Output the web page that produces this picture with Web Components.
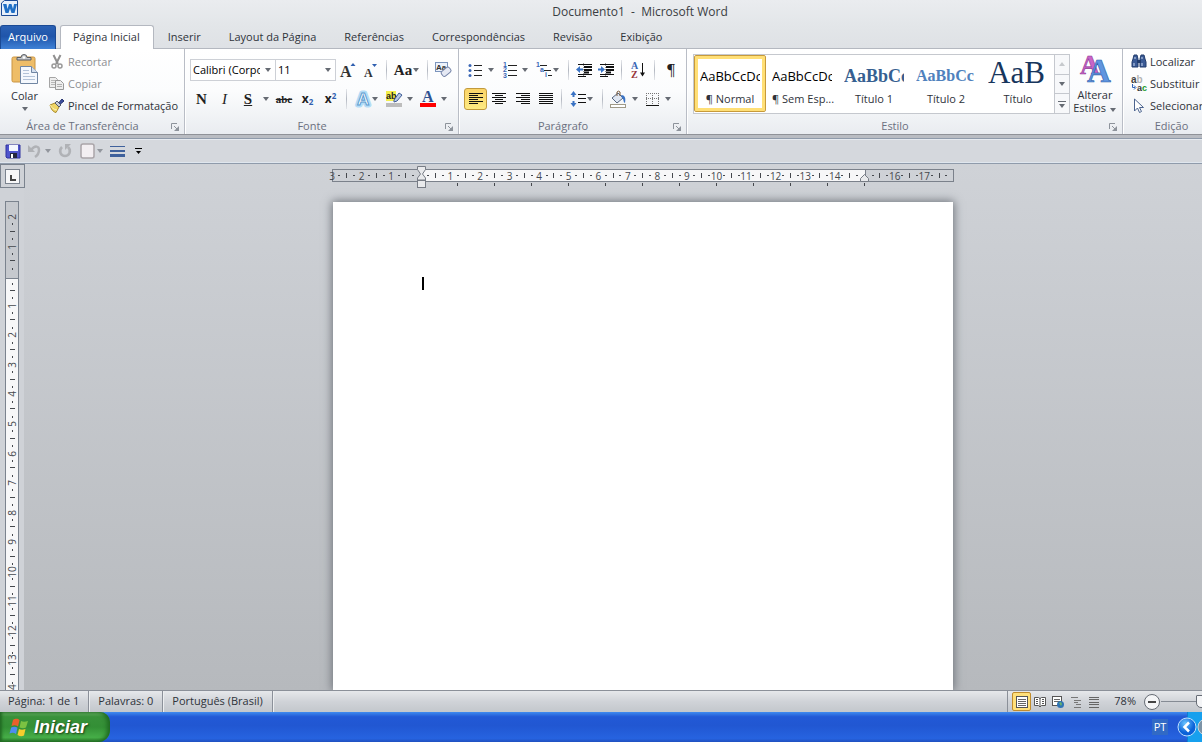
<!DOCTYPE html>
<html lang="pt-BR">
<head>
<meta charset="utf-8">
<title>Documento1 - Microsoft Word</title>
<style>
html, body { height: 100%; margin: 0; }
body { font: 11px/16px "Open Sans", "Noto Sans", sans-serif; color: #2f333a; overflow: hidden; }
</style>
</head>
<body>
<word-app></word-app>
<script>
const ICONS = {
  word: [17, 16, '<path d="M.5 3L3.500.500h13v15H.5z" fill="#e6effb" stroke="#1c4b96"/><path d="M2 4h3.500l1 5 1.500-5h2.500l1.500 5 1-5H16l-2.500 9H10.500L9 8.500 7.500 13H4.500z" fill="#1f6fc6"/>'],
  paste: [28, 30, '<rect x="1" y="3" width="23" height="25" rx="1.500" fill="#eebd68" stroke="#c99443"/><path d="M6 6V3.500h4a3 3 0 0 1 6 0h4V6z" fill="#c3c6ca" stroke="#5a5d62"/><circle cx="13" cy="3.500" r="1.200" fill="#fff"/><path d="M9.500 12.500h11l6 6v11h-17z" fill="#f4f8fd" stroke="#7086a3"/><path d="M20.500 12.500v6h6" fill="#d2deee" stroke="#7086a3"/><path d="M12 16.500h6M12 19.500h6M12 22.500h12M12 25.500h12" stroke="#b3c3d8"/>'],
  cut: [16, 16, '<path d="M4.500 1l4.500 9M11.500 1L7 10" stroke="#909090" stroke-width="2" fill="none"/><circle cx="5" cy="12" r="2" fill="none" stroke="#999" stroke-width="1.500"/><circle cx="11" cy="12" r="2" fill="none" stroke="#999" stroke-width="1.500"/>'],
  copy: [16, 16, '<path d="M.5 1.500h6l2 2v8h-8z" fill="#eee" stroke="#a5a5a5"/><path d="M2 4.500h5M2 6.500h5M2 8.500h4" stroke="#b8b8b8"/><path d="M6.500 4.500h5l3 3v6h-8z" fill="#eee" stroke="#999"/><path d="M8 8.500h5M8 10.500h5" stroke="#b0b0b0"/>'],
  brush: [16, 16, '<path d="M1 7l5-2 4 4-3 5.500C4 14 2 11 1 7z" fill="#f0d566" stroke="#a98a2a"/><path d="M1 7c1 2 4 5 7 5" stroke="#fdf4bb" fill="none"/><path d="M6 5l2-2 4 4-2 2z" fill="#c9cdd6" stroke="#555c6c"/><path d="M10 4.500L13 1l2 2-3.500 3z" fill="#3c4da0" stroke="#28346f"/>'],
  grow: [16, 16, '<text x="0" y="15" font-family="Liberation Serif" font-weight="700" font-size="16" fill="#333">A</text><path d="M10.500 4l2.500-3 2.500 3z" fill="#2f5fb0"/>'],
  shrink: [16, 16, '<text x="1" y="15" font-family="Liberation Serif" font-weight="700" font-size="12" fill="#333">A</text><path d="M9 2h5l-2.500 3z" fill="#2f5fb0"/>'],
  clear: [18, 18, '<rect x="1.500" y="1.500" width="12" height="9" fill="#eef3fb" stroke="#7c95bd"/><text x="2" y="9" font-family="Liberation Sans" font-size="8" font-weight="700" fill="#333">Aa</text><rect x="7" y="8.500" width="10" height="6" rx="2" transform="rotate(-40 11 11)" fill="#e5e9f4" stroke="#7584a8"/>'],
  glow: [16, 16, '<g font-family="Liberation Sans" font-weight="700" font-size="17" fill="#fff"><text x="2" y="14" stroke="#b4dcf6" stroke-width="5" stroke-linejoin="round">A</text><text x="2" y="14" stroke="#5b9bd0">A</text></g>'],
  mark: [16, 18, '<rect x="0" y="1" width="10" height="10" fill="#f4f04a"/><text x="0" y="9" font-family="Liberation Sans" font-size="9" font-weight="700" fill="#222">ab</text><path d="M8 10l5-7 3 2-5 6-3 1z" fill="#b8c9e6" stroke="#3f5d96"/><rect x="0" y="13" width="16" height="4" fill="#bdbdbd"/>'],
  color: [16, 18, '<text x="2" y="12" font-family="Liberation Serif" font-weight="700" font-size="16" fill="#2f5291">A</text><rect x="0" y="13" width="16" height="4" fill="#f00"/>'],
  bullets: [16, 16, '<path d="M7 3.500h8M7 8.500h8M7 13.500h8" stroke="#222"/><g fill="#3a66b5"><circle cx="3" cy="3.500" r="1.500"/><circle cx="3" cy="8.500" r="1.500"/><circle cx="3" cy="13.500" r="1.500"/></g>'],
  numbers: [16, 16, '<path d="M7 3.500h9M7 8.500h9M7 13.500h9" stroke="#222"/><g font-family="Liberation Sans" font-weight="700" font-size="7" fill="#3a66b5"><text x="2" y="5">1</text><text x="2" y="10">2</text><text x="2" y="16">3</text></g>'],
  multi: [16, 16, '<path d="M4 3.500h7M8 8.500h7M12 13.500h4" stroke="#222"/><g font-family="Liberation Sans" font-weight="700" font-size="7" fill="#3a66b5"><text x="0" y="5">1</text><text x="4" y="10">a</text><text x="9" y="15">i</text></g>'],
  outdent: [16, 16, '<path d="M2 2.500h14M2 12.500h14M2 14.500h8" stroke="#111"/><path d="M8 5h8M8 8h8M8 10.500h5" stroke="#111" stroke-width="2"/><path d="M7.500 1v14" stroke="#999" stroke-dasharray="1 1"/><path d="M0 7.500L4 4v2.500h3v2H4V11z" fill="#3a73c4"/>'],
  indent: [16, 16, '<path d="M2 2.500h14M2 12.500h14M2 14.500h8" stroke="#111"/><path d="M8 5h8M8 8h8M8 10.500h5" stroke="#111" stroke-width="2"/><path d="M7.500 1v14" stroke="#999" stroke-dasharray="1 1"/><path d="M7 7.500L3 4v2.500H0v2h3V11z" fill="#3a73c4"/>'],
  sort: [16, 18, '<text x="1" y="8" font-family="Liberation Serif" font-weight="700" font-size="10" fill="#3a66b5">A</text><text x="1" y="17" font-family="Liberation Serif" font-weight="700" font-size="10" fill="#98343a">Z</text><path d="M12.500 2v12" stroke="#111"/><path d="M10 11.500h5l-2.500 4z" fill="#111"/>'],
  left: [16, 16, '<path d="M1 2.500h14M1 4.500h9M1 6.500h14M1 8.500h9M1 10.500h14M1 12.500h9" stroke="#111"/>'],
  center: [16, 16, '<path d="M1 2.500h14M4 4.500h8M1 6.500h14M4 8.500h8M1 10.500h14M4 12.500h8" stroke="#111"/>'],
  right: [16, 16, '<path d="M1 2.500h14M6 4.500h9M1 6.500h14M6 8.500h9M1 10.500h14M6 12.500h9" stroke="#111"/>'],
  justify: [16, 16, '<path d="M1 2.500h14M1 4.500h14M1 6.500h14M1 8.500h14M1 10.500h14M1 12.500h14" stroke="#111"/>'],
  spacing: [16, 18, '<path d="M8 4.500h8M8 8.500h8M8 12.500h8" stroke="#111" stroke-width="1.200"/><path d="M3.500 1l3 4h-2v2h-2V5h-2zM3.500 17l3-4h-2v-2h-2v2h-2z" fill="#3a73c4"/>'],
  fill: [18, 18, '<path d="M3 8l6-5 5 5-6 5z" fill="#dfe6f1" stroke="#56657f"/><path d="M8 6V2a2 2 0 0 1 3 0v4" fill="none" stroke="#7a5a3a"/><path d="M12 5c4 0 5 3 4 8-2-1-1-4-3-5z" fill="#3a73c4"/><rect x="1.500" y="14.500" width="15" height="3" fill="#fff" stroke="#a09a88"/>'],
  borders: [16, 16, '<path d="M2.500 2v11M8.500 2v11M14.500 2v11M2 2.500h13M2 7.500h13" stroke="#777" stroke-dasharray="1 1"/><path d="M2 14.500h13" stroke="#111"/>'],
  styles: [32, 30, '<g font-family="Liberation Serif" font-weight="700"><text x="1" y="20" font-size="27" fill="#c965c8" stroke="#8f3795" stroke-width=".6">A</text><text x="8" y="28" font-size="33" fill="#5f95e0" stroke="#2c5ca8" stroke-width=".6">A</text></g>'],
  find: [16, 16, '<path d="M2 5l1-4h3l1 4v8H1V8zM9 5l1-4h3l1 4 1 3v5H9z" fill="#3a5a95" stroke="#223c6c"/><path d="M6 6h4v3H6z" fill="#223c6c"/><path d="M3 9v3M11 9v3M4 3v2M11 3v2" stroke="#cbd9f2"/>'],
  replace: [16, 16, '<text x="0" y="7" font-family="Liberation Sans" font-weight="700" font-size="10" fill="#444">a<tspan fill="#b5b5b5">b</tspan></text><path d="M1.500 8v3.500H4M3 9.500l2 2-2 2" stroke="#2f62b5" fill="none"/><text x="6" y="15" font-family="Liberation Sans" font-weight="700" font-size="9" fill="#333">a<tspan fill="#1b9b2b">c</tspan></text>'],
  select: [16, 16, '<path d="M3.500 1v12l3-3 2 4.500 2-1L8.500 9.500h4z" fill="#fff" stroke="#4c648f"/>'],
  save: [16, 16, '<path d="M1 2h14v13H2l-1-1z" fill="#4f55cc" stroke="#3133a0"/><rect x="4" y="2" width="9" height="6" fill="#f4f7ff"/><rect x="5" y="10" width="7" height="5" fill="#23263f"/><rect x="6" y="11" width="2" height="4" fill="#fff"/>'],
  undo: [16, 16, '<path d="M4 7c4-5 8-4 8 0 0 3-1 5-4 7" fill="none" stroke="#b0b2b6" stroke-width="2.500"/><path d="M1 2v7h7z" fill="#b0b2b6"/>'],
  redo: [16, 16, '<path d="M4 4c-4 4-1 9 3 9s7-5 3-9" fill="none" stroke="#b0b2b6" stroke-width="2.500"/><path d="M7 1h6L7 7z" fill="#b0b2b6"/>'],
  box: [16, 16, '<rect x="1" y="1" width="13" height="14" rx="2" fill="#f3eff2" stroke="#aaa5a9" stroke-width="1.500"/>'],
  lines: [16, 16, '<path d="M0 3.500h15" stroke="#3f619c"/><path d="M0 8h15" stroke="#3f619c" stroke-width="2"/><path d="M0 12.500h15" stroke="#3f619c" stroke-width="3"/>'],
  more: [8, 8, '<path d="M0 1.500h7" stroke="#000"/><path d="M1 4h5L3.500 7z"/>'],
  launch: [8, 8, '<path d="M.5 6V.5H6" fill="none" stroke="#8d939b"/><path d="M3 3l3 3" stroke="#8d939b"/><path d="M8 3v5H3z" fill="#8d939b"/>'],
  down: [8, 4, '<path d="M1 0h6L4 4z" fill="#666b73"/>'],
  up: [8, 4, '<path d="M1 4h6L4 0z" fill="#c6c9cd"/>'],
  expand: [8, 8, '<path d="M0 1.500h8" stroke="#666b73"/><path d="M1 4h6L4 8z" fill="#666b73"/>'],
  print: [14, 14, '<rect x="1.500" y="1.500" width="11" height="11" fill="#fff" stroke="#555"/><path d="M3 4.500h8M3 6.500h8M3 8.500h8M3 10.500h8" stroke="#666"/>'],
  read: [14, 14, '<path d="M1.500 2.500h4l1.500 1 1.500-1h4v8h-4L7 12l-1.500-1.500h-4z" fill="#fff" stroke="#555"/><path d="M7 3v8M3 4.500h2M3 6.500h2M3 8.500h2M9 4.500h2M9 6.500h2M9 8.500h2" stroke="#555"/>'],
  web: [14, 14, '<rect x="1.500" y="1.500" width="9" height="9" fill="#fff" stroke="#555"/><path d="M3 4.500h6M3 6.500h6" stroke="#666"/><circle cx="9.500" cy="9.500" r="3.500" fill="#3074b5"/><path d="M8 8l2-1 1 2-1 2z" fill="#69b36b"/>'],
  outline: [14, 14, '<path d="M2 2.500h7M5 5.500h7M5 7.500h4M7 9.500h5M5 12.500h7" stroke="#777"/>'],
  draft: [14, 14, '<path d="M2 2.500h10M2 4.500h10M2 7.500h10M2 9.500h10M2 12.500h10" stroke="#666"/>'],
  minus: [16, 16, '<circle cx="8" cy="8" r="7.500" fill="#f4f5f7" stroke="#666c75"/><path d="M4 8h8" stroke="#444" stroke-width="2"/>'],
  flag: [20, 20, '<path d="M3 3c3-2 5-1 6.500 0L8 9.500C6 8 4 8 1.500 9z" fill="#e9602c"/><path d="M11 4c2 1 4 1 7 0l-2 6.500c-2 1-4 1-6.500 0z" fill="#7cc242"/><path d="M1.200 10.500c2.500-1 4.500-1 6.300.3L6 17c-2-1.500-4-1.500-6.500-.5z" fill="#4d8df0"/><path d="M9 12c2 1 4 1 6.500 0L14 18.500c-2 1-4 1-6.500-.5z" fill="#f7cd2d"/>'],
  chevron: [20, 20, '<defs><radialGradient id="g" cx=".4" cy=".3"><stop offset="0" stop-color="#6cc5ff"/><stop offset="1" stop-color="#0b62d8"/></radialGradient></defs><circle cx="10" cy="10" r="9" fill="url(#g)" stroke="#bfe0ff"/><path d="M12 5.500L7.500 10l4.500 4.500" fill="none" stroke="#fff" stroke-width="2.500"/>'],
  tray: [18, 18, '<circle cx="9" cy="9" r="8" fill="#7c93a6" stroke="#ccd6de"/><circle cx="9" cy="9" r="3" fill="#ddd"/>'],
  hourglass: [9, 22, '<path d="M.5.500h8v3l-3 4.500 3 4v2H.5v-2l3-4-3-4.500z" fill="#e9eaec" stroke="#777c85"/><rect x=".5" y="14.500" width="8" height="7" fill="#e9eaec" stroke="#777c85"/>'],
  margin: [9, 8, '<path d="M.5 7.500v-3l4-4 4 4v3z" fill="#e9eaec" stroke="#777c85"/>']
};

const define = (name, html, setup) => {
  const tpl = document.createElement('template');
  tpl.innerHTML = html;
  customElements.define(name, class extends HTMLElement {
    connectedCallback() {
      if (this.shadowRoot) return;
      this.attachShadow({ mode: 'open' }).append(tpl.content.cloneNode(true));
      if (setup) setup(this, this.shadowRoot);
    }
  });
};

define('w-icon', '<style>:host{display:inline-flex;flex:none}svg{display:block;overflow:visible}</style>', (el, root) => {
  const [w, h, body] = ICONS[el.getAttribute('name')];
  const box = document.createElement('div');
  box.innerHTML = `<svg width="${w}" height="${h}" viewBox="0 0 ${w} ${h}" aria-hidden="true">${body}</svg>`;
  root.append(box);
});

define('w-sep', '<style>:host{display:block;flex:none;width:1px;height:20px;margin:0 4px;background:linear-gradient(#e4e6ea,#b3b8c1,#e4e6ea)}</style>');

/* Small ribbon button; "menu" adds a drop-down arrow, "tight" brings it next to the icon. */
define('w-tool', `<style>
:host{display:block;flex:none;width:var(--w,23px);height:22px}
button{all:unset;box-sizing:border-box;width:100%;height:22px;display:flex;align-items:center;justify-content:center;gap:4px;color:#222;font-family:"Liberation Serif",serif;font-size:15px;line-height:16px;font-weight:700;border-radius:3px}
:host([tight]) button{gap:0}
:host([active]) button{border:1px solid #c29a3c;background:linear-gradient(#fbd468,#fdea82)}
</style><button type="button"><slot></slot></button>`, (el, root) => {
  const b = root.querySelector('button');
  if (el.hasAttribute('label')) b.setAttribute('aria-label', el.getAttribute('label'));
  if (el.hasAttribute('menu')) b.insertAdjacentHTML('beforeend', '<w-icon name="down"></w-icon>');
});

define('w-command', `<style>
:host{display:block}
button{all:unset;display:flex;align-items:center;gap:3px;height:22px;white-space:nowrap}
:host([disabled]) button{color:#8d8f93}
</style><button type="button"><slot name="icon"></slot><slot></slot></button>`);

define('w-group', `<style>
:host{display:flex;flex-direction:column;flex:none;box-sizing:border-box;border-right:1px solid #b9bdc6;box-shadow:1px 0 #fff}
.body{height:68px;box-sizing:border-box;padding-top:2px}
footer{display:flex;align-items:center;height:17px;color:#6b7080}
footer span{flex:1;text-align:center}
button{all:unset;display:flex;width:13px;height:8px;padding:2px 0 0 6px}
:host([plain]) button{display:none}
</style><div class="body"><slot></slot></div><footer><span></span><button type="button" aria-label="Mais opções"><w-icon name="launch"></w-icon></button></footer>`,
(el, root) => { root.querySelector('span').textContent = el.getAttribute('label'); });

define('w-combo', `<style>
:host{display:grid;flex:none;align-items:center;justify-items:end;width:var(--w);height:22px;box-sizing:border-box;border:1px solid #cdd0d6;background:#fff}
select,w-icon{grid-area:1/1}
select{appearance:none;border:0;margin:0;width:100%;height:20px;padding:0 15px 0 2px;background:none;font:inherit;color:#000;border-radius:0}
w-icon{margin-right:3px;pointer-events:none}
</style><select><option></option></select><w-icon name="down"></w-icon>`, (el, root) => {
  root.querySelector('option').textContent = el.getAttribute('value');
  root.querySelector('select').setAttribute('aria-label', el.getAttribute('label'));
});

define('w-style', `<style>
:host{display:block;width:72px;flex:none}
button{all:unset;box-sizing:border-box;width:72px;height:57px;padding:3px 6px;display:flex;flex-direction:column;overflow:hidden}
.sample{height:31px;display:flex;align-items:flex-end;white-space:nowrap;overflow:hidden;color:var(--c,#000);font:var(--f,13px/26px "Open Sans",sans-serif)}
.name{text-align:center;height:20px;line-height:20px;white-space:nowrap}
:host([active]) button{border:1px solid #c79a3b;border-radius:2px;box-shadow:inset 0 0 0 3px #ffdf76;padding:2px 5px}
</style><button type="button"><span class="sample"></span><span class="name"><slot></slot></span></button>`,
(el, root) => { root.querySelector('.sample').textContent = el.getAttribute('sample'); });

define('title-bar', `<style>
:host{display:flex;height:25px;box-sizing:border-box;background:linear-gradient(#eaecef,#e3e6e9);position:relative}
h1{flex:1;margin:0;padding-left:78px;text-align:center;font-size:12px;line-height:23px;font-weight:400;color:#3a3d42;white-space:pre}
w-icon{position:absolute;left:1px;top:0}
</style><w-icon name="word"></w-icon><h1>Documento1  -  Microsoft Word</h1>`);

define('tab-bar', `<style>
:host{display:flex;height:24px;background:linear-gradient(#e3e6e9,#dee1e5);box-shadow:inset 0 -1px #b4b8c0}
a{box-sizing:border-box;height:24px;padding:0 14px;line-height:24px;color:inherit;text-decoration:none;white-space:nowrap}
.file{width:56px;padding:0;text-align:center;color:#fff;border:1px solid #1b4a94;border-bottom:0;border-radius:3px 3px 0 0;background:linear-gradient(#2a61b4,#1f55aa 45%,#3f81d6);line-height:22px;margin-right:4px}
.on{background:#fff;border:1px solid #b4b8c0;border-bottom:0;border-radius:3px 3px 0 0;padding:0 13px 0 12px;line-height:22px}
</style><a class="file" href="#arquivo">Arquivo</a><a class="on" href="#inicio">Página Inicial</a><a href="#inserir">Inserir</a><a href="#layout">Layout da Página</a><a href="#referencias">Referências</a><a href="#correspondencias">Correspondências</a><a href="#revisao">Revisão</a><a href="#exibicao">Exibição</a>`);

define('word-ribbon', `<style>
:host{display:flex;overflow:hidden;height:85px;background:linear-gradient(#fff,#fbfcfd 50%,#e9ecf0);border-bottom:1px solid #8f9298}
.clip{width:185px}.font{width:274px}.para{width:228px}.sty{width:436px}.edit{width:98px}
.row{display:flex;align-items:center}
.stack{display:flex}
.big{all:unset;display:flex;flex-direction:column;align-items:center;text-align:center;width:49px;padding-top:3px;height:63px}
.big w-icon:first-child{margin-bottom:4px}
.big w-icon:last-child{margin-top:3px}
.rows{display:flex;flex-direction:column;gap:7px;padding-top:8px}
.font .rows,.para .rows{padding-left:5px}
w-combo+w-combo{margin-left:-1px}
i,s,u{font-weight:700}i{font-weight:400}
s{font:700 11px/16px "Liberation Serif",serif}
.x{display:flex;font:700 12px/16px "Open Sans",sans-serif}
sub,sup{font-size:8px;line-height:10px;color:#2f5fb0;align-self:flex-end}
sup{align-self:flex-start}
.pil{font:17px/20px "Liberation Serif",serif}
.gallery{display:flex;width:377px;box-sizing:border-box;height:60px;border:1px solid #c5c8ce;background:#fff;margin:3px 0 0 6px;flex:none}
.scroll{display:flex;flex-direction:column;margin-left:auto;width:14px;border-left:1px solid #c5c8ce}
.scroll button{all:unset;flex:1;display:flex;align-items:center;justify-content:center;background:#f7f8fa}
.scroll button+button{border-top:1px solid #c5c8ce}
.alter{width:50px}
.alter span{line-height:13px}
.edit w-command{padding-left:8px}
</style>
<w-group class="clip" label="Área de Transferência"><div class="stack">
<button class="big" type="button"><w-icon name="paste"></w-icon><span>Colar</span><w-icon name="down"></w-icon></button>
<div><w-command disabled><w-icon slot="icon" name="cut"></w-icon>Recortar</w-command><w-command disabled><w-icon slot="icon" name="copy"></w-icon>Copiar</w-command><w-command><w-icon slot="icon" name="brush"></w-icon>Pincel de Formatação</w-command></div></div></w-group>
<w-group class="font" label="Fonte"><div class="rows">
<div class="row"><w-combo style="--w:86px" value="Calibri (Corpo)" label="Fonte"></w-combo><w-combo style="--w:61px" value="11" label="Tamanho"></w-combo>
<w-tool label="Aumentar fonte" style="--w:24px"><w-icon name="grow"></w-icon></w-tool><w-tool label="Reduzir fonte" style="--w:22px"><w-icon name="shrink"></w-icon></w-tool><w-sep></w-sep><w-tool tight menu style="--w:32px">Aa</w-tool><w-sep></w-sep><w-tool label="Limpar formatação" style="--w:22px"><w-icon name="clear"></w-icon></w-tool></div>
<div class="row"><w-tool>N</w-tool><w-tool><i>I</i></w-tool><w-tool style="--w:24px"><u>S</u></w-tool><w-tool label="Sublinhado" style="--w:12px"><w-icon name="down"></w-icon></w-tool><w-tool style="--w:24px"><s>abc</s></w-tool><w-tool><span class="x">x<sub>2</sub></span></w-tool><w-tool><span class="x">x<sup>2</sup></span></w-tool><w-sep></w-sep><w-tool label="Efeitos" tight menu style="--w:32px"><w-icon name="glow"></w-icon></w-tool><w-tool label="Realce" menu style="--w:34px"><w-icon name="mark"></w-icon></w-tool><w-tool label="Cor da fonte" menu style="--w:34px"><w-icon name="color"></w-icon></w-tool></div>
</div></w-group>
<w-group class="para" label="Parágrafo"><div class="rows">
<div class="row"><w-tool label="Marcadores" menu style="--w:34px"><w-icon name="bullets"></w-icon></w-tool><w-tool label="Numeração" menu style="--w:34px"><w-icon name="numbers"></w-icon></w-tool><w-tool label="Lista de vários níveis" tight menu style="--w:32px"><w-icon name="multi"></w-icon></w-tool><w-sep></w-sep><w-tool label="Diminuir recuo" style="--w:22px"><w-icon name="outdent"></w-icon></w-tool><w-tool label="Aumentar recuo" style="--w:22px"><w-icon name="indent"></w-icon></w-tool><w-sep></w-sep><w-tool label="Classificar" style="--w:24px"><w-icon name="sort"></w-icon></w-tool><w-sep></w-sep><w-tool style="--w:24px"><span class="pil">¶</span></w-tool></div>
<div class="row"><w-tool label="Esquerda" active><w-icon name="left"></w-icon></w-tool><w-tool label="Centralizar" style="--w:24px"><w-icon name="center"></w-icon></w-tool><w-tool label="Direita" style="--w:24px"><w-icon name="right"></w-icon></w-tool><w-tool label="Justificar" style="--w:22px"><w-icon name="justify"></w-icon></w-tool><w-sep></w-sep><w-tool label="Espaçamento" tight menu style="--w:32px"><w-icon name="spacing"></w-icon></w-tool><w-sep></w-sep><w-tool label="Sombreamento" menu style="--w:34px"><w-icon name="fill"></w-icon></w-tool><w-tool label="Bordas" menu style="--w:34px"><w-icon name="borders"></w-icon></w-tool></div>
</div></w-group>
<w-group class="sty" label="Estilo"><div class="stack"><div class="gallery">
<w-style active sample="AaBbCcDc">¶ Normal</w-style><w-style sample="AaBbCcDc">¶ Sem Esp...</w-style><w-style sample="AaBbCc" style="--c:#365f91;--f:700 18px/26px 'Liberation Serif',serif">Título 1</w-style><w-style sample="AaBbCc" style="--c:#4f81bd;--f:700 16px/26px 'Liberation Serif',serif">Título 2</w-style><w-style sample="AaB" style="--c:#17365d;--f:31px/32px 'Liberation Serif',serif">Título</w-style>
<div class="scroll"><button type="button" aria-label="Acima"><w-icon name="up"></w-icon></button><button type="button" aria-label="Abaixo"><w-icon name="down"></w-icon></button><button type="button" aria-label="Mais"><w-icon name="expand"></w-icon></button></div></div>
<button class="big alter" type="button"><w-icon name="styles"></w-icon><span>Alterar<br>Estilos <w-icon name="down"></w-icon></span></button></div></w-group>
<w-group plain class="edit" label="Edição"><w-command><w-icon slot="icon" name="find"></w-icon>Localizar&nbsp; <w-icon name="down"></w-icon></w-command><w-command><w-icon slot="icon" name="replace"></w-icon>Substituir</w-command><w-command><w-icon slot="icon" name="select"></w-icon>Selecionar</w-command></w-group>`);

define('quick-bar', `<style>
:host{display:flex;align-items:center;gap:6px;height:24px;border-top:1px solid #8f9bab;border-bottom:1px solid #8f9bab;box-shadow:inset 0 1px #e6eaef,inset 0 -1px #dfe6ee;background:#d5d8dd;padding-left:5px;margin-top:3px}
button{all:unset;display:flex;align-items:center;height:22px}
.faded w-icon+w-icon{opacity:.6}
.undo w-icon+w-icon{margin-left:1px}
.lines{margin-right:3px}
</style><button type="button" aria-label="Salvar"><w-icon name="save"></w-icon></button><button class="faded undo" type="button" aria-label="Desfazer"><w-icon name="undo"></w-icon><w-icon name="down"></w-icon></button><button type="button" aria-label="Refazer"><w-icon name="redo"></w-icon></button><button class="faded" type="button" aria-label="Forma"><w-icon name="box"></w-icon><w-icon name="down"></w-icon></button><button class="lines" type="button" aria-label="Linhas"><w-icon name="lines"></w-icon></button><button type="button" aria-label="Personalizar"><w-icon name="more"></w-icon></button>`);

/* Marks every quarter of a centimetre: number, dot, bar, dot. */
const marks = (from, to, skip = []) => {
  let html = '';
  for (let q = from * 4; q <= to * 4; q++) {
    const n = q / 4, kind = ((q % 4) + 4) % 4;
    html += '<span class="m">' + (skip.includes(n) ? '' : kind === 0 ? `<b>${Math.abs(n)}</b>` : kind === 2 ? '<i></i>' : '<em></em>') + '</span>';
  }
  return html;
};
const MARK_CSS = 'b{font:10px/10px "Open Sans",sans-serif;color:#45484d;flex:none}i{flex:none;width:1px;height:5px;background:#45484d}em{flex:none;width:2px;height:1px;background:#45484d}.m{display:flex;align-items:center;justify-content:center;width:0}';

define('h-ruler', `<style>${MARK_CSS}
:host{display:block;width:622px;height:20px;padding-top:5px;flex:none}
.bar{display:flex;height:13px}
.sec{flex:3;min-width:0;display:flex;justify-content:space-between;box-sizing:border-box;height:13px;border:solid #7b818b;border-width:1px 0;position:relative}
.l{box-shadow:inset 1px 0 #7b818b}.r{box-shadow:inset 1px 0 #7b818b,inset -1px 0 #7b818b}
.mid{flex:15;background:#f7f7f8}
.hg{position:absolute;left:-4px;top:-4px}.mg{position:absolute;right:-4px;top:4px;z-index:1}
.tabs{display:flex;justify-content:space-between;margin:1px 89px 0 125px}
.tabs i{height:3px}
</style><div class="bar"><div class="sec l">${marks(-3, 0, [0])}</div><div class="sec mid">${marks(0, 15, [0, 15])}<w-icon class="hg" name="hourglass"></w-icon><w-icon class="mg" name="margin"></w-icon></div><div class="sec r">${marks(15, 18, [15, 18])}</div></div><div class="tabs">${'<i></i>'.repeat(12)}</div>`);

define('v-ruler', `<style>${MARK_CSS}
:host{display:block;width:24px;flex:none;background:#cfd2d7;overflow:hidden}
.bar{box-sizing:border-box;width:14px;margin:13px 5px 0;border:1px solid #7b838e;padding-top:15px;background:linear-gradient(#c6c9ce 76px,#7b838e 76px,#7b838e 77px,#f7f7f8 77px)}
.list{display:flex;flex-direction:column;align-items:center;justify-content:space-between;height:829px}
.m{height:0;transform:rotate(-90deg)}
</style><div class="bar"><div class="list">${marks(-2, 26, [0])}</div></div>`);

define('word-page', `<style>
:host{display:block;box-sizing:border-box;width:620px;flex:1;min-height:0;margin-top:13px;padding:75px 89px 0;background:#fff;box-shadow:0 0 9px 1px #6d7279}
div{outline:none;height:14px}
span{display:inline-block;width:2px;height:13px;background:#000}
</style><div role="textbox" aria-label="Documento" contenteditable="true"><span></span></div>`);

define('work-space', `<style>
:host{display:flex;flex:1;min-height:0;overflow:hidden;background:linear-gradient(#cfd2d7,#b6b9bd)}
.side{display:flex;flex-direction:column;width:24px;flex:none;background:#cfd2d7}
.side v-ruler{flex:1;min-height:0}
button{all:unset;box-sizing:border-box;display:flex;align-items:center;justify-content:center;width:25px;height:24px;border:1px solid #7b838e;background:#cfd2d7}
button span{display:block;box-sizing:border-box;width:15px;height:15px;background:#f7f7f8;border:1px solid #7b838e}
button span::before{content:"";display:block;box-sizing:border-box;width:6px;height:6px;margin:5px 0 0 4px;border:solid #444;border-width:0 0 2px 2px}
.desk{flex:1;display:flex;flex-direction:column;align-items:center;padding-left:60px;min-width:0}
</style><div class="side"><button type="button" aria-label="Tabulação"><span></span></button><v-ruler></v-ruler></div><div class="desk"><h-ruler></h-ruler><word-page></word-page></div>`);

define('status-bar', `<style>
:host{display:flex;align-items:center;height:22px;box-sizing:border-box;border-top:1px solid #8b9099;background:linear-gradient(#e6e8eb,#d0d3d8 50%,#c3c7cc);overflow:hidden;white-space:nowrap}
.p{padding:0 9px 2px;line-height:19px;border-right:1px solid #8b9099;box-shadow:1px 0 #eceef0}
.p:first-of-type{padding-left:8px}
.v{display:flex;align-items:center;margin-left:auto;border-left:1px solid #8b9099;height:21px;padding-left:4px;flex:none}
button{all:unset;display:flex;align-items:center;justify-content:center;width:18px;height:18px}
.on{border:1px solid #c18c2c;border-radius:2px;background:#ffe07a;width:17px;height:17px}
label{padding:0 7px 2px 11px}
.z{width:41px;display:flex;overflow:hidden}
input{appearance:none;flex:none;width:80px;height:14px;margin:0;background:linear-gradient(#858b94,#858b94) center/100% 1px no-repeat}
input::-webkit-slider-thumb{appearance:none;width:11px;height:13px;background:#f4f5f7;border:1px solid #666c75;border-radius:1px 1px 5px 5px}
</style><span class="p">Página: 1 de 1</span><span class="p">Palavras: 0</span><span class="p">Português (Brasil)</span>
<div class="v"><button class="on" type="button" aria-label="Layout de impressão"><w-icon name="print"></w-icon></button><button type="button" aria-label="Leitura"><w-icon name="read"></w-icon></button><button type="button" aria-label="Web"><w-icon name="web"></w-icon></button><button type="button" aria-label="Tópicos"><w-icon name="outline"></w-icon></button><button type="button" aria-label="Rascunho"><w-icon name="draft"></w-icon></button><label for="zoom">78%</label><button type="button" aria-label="Reduzir"><w-icon name="minus"></w-icon></button><div class="z"><input id="zoom" type="range" min="0" max="100" value="50"></div></div>`);

define('task-bar', `<style>
:host{display:flex;align-items:center;height:30px;background:linear-gradient(#3f8bef,#2259d6 16%,#2157d2 45%,#2663e0 88%,#1f50c0);overflow:hidden}
.start{all:unset;box-sizing:border-box;display:flex;align-items:center;gap:4px;width:110px;height:30px;padding-left:10px;color:#fff;font:italic 700 18px/28px "Liberation Sans",sans-serif;text-shadow:1px 1px 2px #1b3d12;border-radius:0 10px 12px 0;background:linear-gradient(#6fb56a,#38913a 16%,#338f35 50%,#46ae48 85%,#2c7a2c);box-shadow:inset -3px 0 4px #1f6a22,inset 2px 0 3px #226b24}
.lang{margin-left:auto;background:#316ac5;color:#fff;line-height:16px;width:16px;text-align:center}
.tray{display:flex;align-items:center;width:25px;height:30px;margin-left:9px;background:linear-gradient(90deg,transparent 10px,#0b7fd0 10px,#0b7fd0 11px,#17a0ee 11px);overflow:hidden}
</style><button class="start" type="button"><w-icon name="flag"></w-icon>Iniciar</button><span class="lang">PT</span><span class="tray"><w-icon name="chevron"></w-icon><w-icon name="tray"></w-icon></span>`);

define('word-app', `<style>:host{display:flex;flex-direction:column;height:100vh;overflow:hidden;background:#b9bcc2}title-bar,tab-bar,word-ribbon,quick-bar,status-bar,task-bar{flex:none}</style>
<title-bar></title-bar><tab-bar></tab-bar><word-ribbon></word-ribbon><quick-bar></quick-bar><work-space></work-space><status-bar></status-bar><task-bar></task-bar>`);
</script>
</body>
</html>
